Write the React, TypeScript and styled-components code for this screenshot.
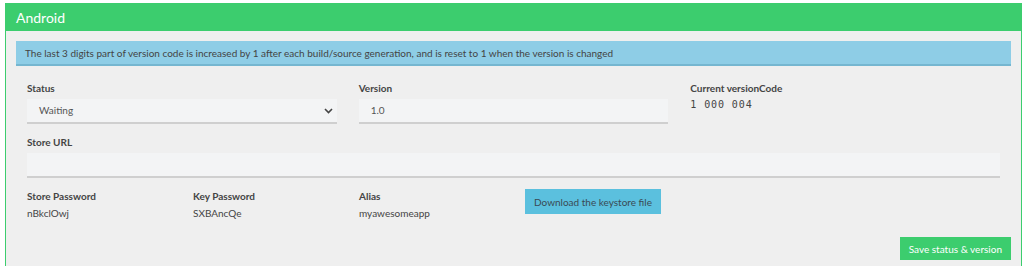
import styled, { createGlobalStyle } from 'styled-components';

const GlobalStyle = createGlobalStyle`
    body {
        margin: 0;
        background: #ffffff;
        font-family: Lato, "Open Sans", sans-serif;
        color: #444;
    }
`;

const green = '#3ccd6e';

type FieldProps = { label: string; children: React.ReactNode };

const Field = ({ label, children }: FieldProps) => (
    <StyledField>
        <Label>{label}</Label>
        {children}
    </StyledField>
);

export default function App() {
    return (
        <Page>
            <GlobalStyle />
            <Panel>
                <Header>Android</Header>
                <Body>
                    <Alert>
                        The last 3 digits part of version code is increased by 1 after each
                        build/source generation, and is reset to 1 when the version is changed
                    </Alert>
                    <Grid $cols="repeat(3, 1fr)">
                        <Field label="Status">
                            <SelectBox>
                                <span>Waiting</span>
                                <svg width="9" height="6" viewBox="0 0 9 6">
                                    <path d="M1 1l3.5 3.5L8 1" fill="none" stroke="#444" strokeWidth="1.6" />
                                </svg>
                            </SelectBox>
                        </Field>
                        <Field label="Version">
                            <InputBox>1.0</InputBox>
                        </Field>
                        <Field label="Current versionCode">
                            <Code>1 000 004</Code>
                        </Field>
                    </Grid>
                    <Grid $cols="1fr">
                        <Field label="Store URL">
                            <InputBox />
                        </Field>
                    </Grid>
                    <Grid $cols="repeat(6, 166px)">
                        <Field label="Store Password">
                            <Value>nBkclOwj</Value>
                        </Field>
                        <Field label="Key Password">
                            <Value>SXBAncQe</Value>
                        </Field>
                        <Field label="Alias">
                            <Value>myawesomeapp</Value>
                        </Field>
                        <ButtonCell>
                            <InfoButton>Download the keystore file</InfoButton>
                        </ButtonCell>
                    </Grid>
                    <Footer>
                        <SaveButton>Save status &amp; version</SaveButton>
                    </Footer>
                </Body>
            </Panel>
        </Page>
    );
}

const Page = styled.div`
    padding: 3px 2px 0 5px;
`;

const Panel = styled.div`
    border: 1px solid ${green};
    border-bottom: none;
    background: #efefef;
`;

const Header = styled.div`
    background: ${green};
    color: #fff;
    font-size: 14px;
    height: 27px;
    line-height: 27px;
    padding-left: 10px;
`;

const Body = styled.div`
    padding: 10px 10px 8px 10px;
`;

const Alert = styled.div`
    background: #8ecde6;
    border-bottom: 2px solid #75b6d0;
    font-size: 10px;
    color: #444;
    padding: 6px 9px 5px 9px;
    margin-bottom: 15px;
`;

const Grid = styled.div<{ $cols: string }>`
    display: grid;
    grid-template-columns: ${(p) => p.$cols};
    margin-bottom: 11px;
`;

const StyledField = styled.div`
    padding: 0 11px;
    display: flex;
    flex-direction: column;
`;

const Label = styled.div`
    font-size: 10px;
    font-weight: 700;
    color: #444;
    margin-bottom: 4px;
    line-height: 14px;
`;

const InputBox = styled.div`
    background: #f3f4f5;
    border-bottom: 2px solid #cfcfcf;
    height: 23px;
    line-height: 23px;
    padding: 0 12px;
    font-size: 10px;
    color: #555;
`;

const SelectBox = styled(InputBox)`
    display: flex;
    align-items: center;
    justify-content: space-between;
    padding-right: 4px;
`;

const Code = styled.div`
    font-family: "DejaVu Sans Mono", monospace;
    font-size: 10px;
    color: #444;
    letter-spacing: 0.9px;
`;

const Value = styled.div`
    font-size: 10px;
    color: #444;
`;

const ButtonCell = styled.div`
    padding: 0 11px;
`;

const InfoButton = styled.button`
    font-family: inherit;
    background: #5bc0de;
    border: none;
    color: #3a4a54;
    font-size: 10px;
    height: 25px;
    padding: 0 9px;
    white-space: nowrap;
    cursor: pointer;
`;

const Footer = styled.div`
    display: flex;
    justify-content: flex-end;
    margin-top: 18px;
`;

const SaveButton = styled.button`
    font-family: inherit;
    background: ${green};
    border: none;
    color: #fff;
    font-size: 10px;
    height: 23px;
    padding: 0 9px;
    cursor: pointer;
`;
